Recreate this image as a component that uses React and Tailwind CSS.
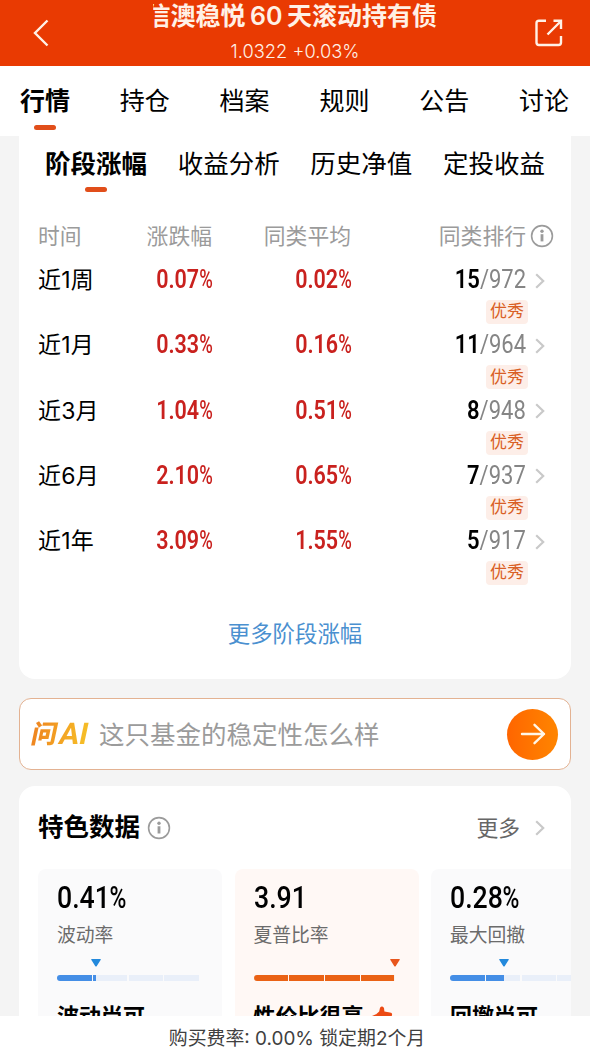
import clsx from "clsx";

const tabs = ["行情", "持仓", "档案", "规则", "公告", "讨论"];
const subTabs = ["阶段涨幅", "收益分析", "历史净值", "定投收益"];

const periods = [
  { label: "近1周", change: "0.07", average: "0.02", rank: 15, total: 972 },
  { label: "近1月", change: "0.33", average: "0.16", rank: 11, total: 964 },
  { label: "近3月", change: "1.04", average: "0.51", rank: 8, total: 948 },
  { label: "近6月", change: "2.10", average: "0.65", rank: 7, total: 937 },
  { label: "近1年", change: "3.09", average: "1.55", rank: 5, total: 917 },
];

const features = [
  { value: "0.41", percent: true, label: "波动率", note: "波动尚可", progress: 39, hot: false },
  { value: "3.91", percent: false, label: "夏普比率", note: "性价比很高", progress: 141, hot: true },
  { value: "0.28", percent: true, label: "最大回撤", note: "回撤尚可", progress: 54, hot: false },
];

const SEGMENT = 34.5;
const SEGMENT_GAP = 1.3;

const InfoIcon = () => (
  <svg width="24" height="24" viewBox="0 0 24 24" fill="none" stroke="#9b9b9b" className="shrink-0">
    <circle cx="12" cy="12" r="10.4" strokeWidth="1.6" />
    <path d="M12 10.2V17.4" strokeWidth="2.8" />
    <circle cx="12" cy="7.2" r="1.7" fill="#9b9b9b" stroke="none" />
  </svg>
);

const Chevron = () => (
  <svg width="10" height="16" viewBox="0 0 10 16" fill="none" stroke="#c9c9c9" strokeWidth="2.2" className="shrink-0">
    <path d="M1.2 1.2L8.2 8L1.2 14.8" />
  </svg>
);

// Narrow digits, with an even narrower percent sign
const Percent = () => <span className="inline-block w-[0.62em] origin-left scale-x-[0.86] font-medium">%</span>;

const Rate = ({ value }) => (
  <span className="origin-right scale-x-[0.86] justify-self-end font-[Roboto] text-[25px] font-semibold text-[#c9211e]">
    {value}
    <Percent />
  </span>
);

const PeriodRow = ({ label, change, average, rank, total }) => (
  <div className="h-[65.3px]">
    <div className="grid h-10 grid-cols-[80px_94px_139px_175px_auto] items-center leading-10">
      <span className="text-[23px] tracking-[0.2px]">{label}</span>
      <Rate value={change} />
      <Rate value={average} />
      <span className="origin-right scale-x-[0.88] justify-self-end font-[Roboto] text-[25px] text-[#858585]">
        <span className="font-semibold text-black">{rank}</span>/{total}
      </span>
      <span className="pt-px pl-[9px]"><Chevron /></span>
    </div>
    <div className="ml-[448px] flex h-6 w-[42px] items-center justify-center rounded-sm bg-[#fdeee8] text-[17px] text-[#d95f25]">
      优秀
    </div>
  </div>
);

const FeatureCard = ({ value, percent, label, note, progress, hot }) => (
  <div className={clsx("h-[200px] w-[184px] shrink-0 rounded-lg pl-[19px]", hot ? "bg-[#fff8f5]" : "bg-[#fafafb]")}>
    <div className="origin-left scale-x-[0.86] pt-2.5 font-[Roboto] text-[31px] leading-[38px] font-medium">
      {value}
      {percent && <Percent />}
    </div>
    <div className="mt-1.5 text-[18.8px] leading-[26px] text-[#6b6b6b]">{label}</div>
    <svg
      width="10"
      height="8"
      viewBox="0 0 10 8"
      className={clsx("mt-2.5", hot ? "fill-[#e8561d]" : "fill-[#2389dc]")}
      style={{ marginLeft: progress - 5 }}
    >
      <path d="M0.8 0H9.2Q10.3 0 9.6 1L5.8 6.9Q5 8 4.2 6.9L0.4 1Q-0.3 0 0.8 0Z" />
    </svg>
    <div className="mt-2 flex w-[142px] gap-[1.3px] overflow-hidden rounded-l-full">
      {[0, 1, 2, 3].map((i) => (
        <div key={i} className={clsx("h-1.5 w-[34.5px] shrink-0", hot ? "bg-[#fdeee8]" : "bg-[#e9eff9]")}>
          <div
            className={clsx("h-full", hot ? "bg-[#ea6215]" : "bg-[#448ee6]")}
            style={{ width: Math.max(0, Math.min(SEGMENT, progress - i * (SEGMENT + SEGMENT_GAP))) }}
          />
        </div>
      ))}
    </div>
    <div className="mt-5 flex items-center gap-2 text-[22px] leading-[30px] font-bold whitespace-nowrap">
      {note}
      {hot && (
        <svg width="21" height="20" viewBox="0 0 21 20" fill="#ec4a13">
          <path d="M0 10L4.5 8V19H0ZM4.4 8L7.2 5.4L8 1.8Q10 -0.8 12 2L12.4 5.6L18 6.4Q20.6 6.8 20 9L18 17Q17.4 19 15.5 19H4.4Z" />
        </svg>
      )}
    </div>
  </div>
);

const App = () => {
  return (
    <div className="flex h-[1053px] w-[590px] flex-col overflow-hidden bg-[#f4f4f4] font-['Inter','Noto_Sans_CJK_SC',sans-serif] text-black">
      {/* Header */}
      <header className="flex h-[66px] shrink-0 items-start bg-[#e93a02] text-[#fff1e6]">
        <svg width="16" height="28" viewBox="0 0 16 28" fill="none" stroke="currentColor" strokeWidth="2.4" className="mt-[19px] ml-[33px]">
          <path d="M14.5 1.5L2 14L14.5 26.5" />
        </svg>
        <div className="ml-[104px] flex w-[284px] flex-col items-center">
          <div className="flex w-full justify-end overflow-hidden text-[25px] leading-8 font-semibold whitespace-nowrap">
            <span>信澳稳悦</span>
            <span className="mx-[4.5px]">60</span>
            <span>天滚动持有债</span>
          </div>
          <div className="text-[18.3px] leading-[38px] font-light">1.0322 +0.03%</div>
        </div>
        <svg width="28" height="28" viewBox="0 0 28 28" fill="none" stroke="currentColor" strokeWidth="2.4" className="mt-[19px] ml-[98px]">
          <path d="M11 1.7H4Q1.5 1.7 1.5 4.2V23.5Q1.5 26 4 26H23.5Q26 26 26 23.5V17" />
          <path d="M12.5 15.5L26 2M18.5 1.7H26V10" />
        </svg>
      </header>

      {/* Tabs */}
      <nav className="flex h-[70px] shrink-0 justify-between bg-white pt-4 pr-[21px] pl-5 text-[25px] leading-[39px]">
        {tabs.map((tab, i) => (
          <div key={tab} className={clsx("flex flex-col items-center", i === 0 && "font-bold")}>
            {tab}
            {i === 0 && <span className="mt-1 h-[5px] w-[22px] rounded-full bg-[#e14e1a]" />}
          </div>
        ))}
      </nav>

      <main className="min-h-0 flex-1 overflow-hidden px-[19px]">
        <section className="h-[543px] rounded-b-2xl bg-white">
          <div className="flex h-[72px] justify-between pt-2 pr-[26px] pl-[26px] text-[25.5px] leading-[39px]">
            {subTabs.map((tab, i) => (
              <div key={tab} className={clsx("flex flex-col items-center", i === 0 && "font-bold")}>
                {tab}
                {i === 0 && <span className="mt-1 h-[5px] w-[22px] rounded-full bg-[#e14e1a]" />}
              </div>
            ))}
          </div>
          <div className="pl-[19px]">
            <div className="grid h-[52px] grid-cols-[80px_94px_139px_175px_auto] items-center pt-1 text-[21.8px] text-[#9b9b9b]">
              <span>时间</span>
              <span className="justify-self-end">涨跌幅</span>
              <span className="justify-self-end">同类平均</span>
              <span className="justify-self-end">同类排行</span>
              <span className="pl-1"><InfoIcon /></span>
            </div>
            {periods.map((period) => (
              <PeriodRow key={period.label} {...period} />
            ))}
          </div>
          <div className="mt-[30px] text-center text-[22.4px] leading-9 text-[#4a90d0]">更多阶段涨幅</div>
        </section>

        <section className="mt-[19px] flex h-[72px] items-center rounded-xl border border-[#e3b292] bg-white px-3">
          <div className="flex w-[56px] -skew-x-12 items-center bg-linear-to-r from-[#ee8420] to-[#f6bf27] bg-clip-text leading-9 text-transparent">
            <span className="text-[25.5px] font-black">问</span>
            <span className="ml-0.5 font-[Roboto] text-[30px] font-bold">AI</span>
          </div>
          <div className="ml-[11px] pt-0.5 text-[25.5px] text-[#9b9b9b]">这只基金的稳定性怎么样</div>
          <div className="ml-auto flex size-[51px] items-center justify-center rounded-full bg-linear-to-r from-[#ff6500] to-[#ff8500]">
            <svg width="26" height="22" viewBox="0 0 26 22" fill="none" stroke="#fff6e8" strokeWidth="2.4" strokeLinecap="round" strokeLinejoin="round">
              <path d="M2 11H24M14.5 1.8L24 11L14.5 20.2" />
            </svg>
          </div>
        </section>

        <section className="mt-4 overflow-hidden rounded-t-2xl bg-white pl-[19px]">
          <div className="flex h-[83px] items-center pr-[26px]">
            <h2 className="text-[25.5px] font-bold">特色数据</h2>
            <span className="ml-[7px]"><InfoIcon /></span>
            <span className="mr-[15px] ml-auto pt-px text-[21.8px] text-[#666]">更多</span>
            <Chevron />
          </div>
          <div className="flex gap-[12.5px]">
            {features.map((feature) => (
              <FeatureCard key={feature.label} {...feature} />
            ))}
          </div>
        </section>
      </main>

      <footer className="z-10 flex h-[37px] shrink-0 items-center justify-center bg-white pt-2.5 pl-1 text-[18.9px] text-[#404040]">
        购买费率: 0.00% 锁定期2个月
      </footer>
    </div>
  );
};

export default App;
